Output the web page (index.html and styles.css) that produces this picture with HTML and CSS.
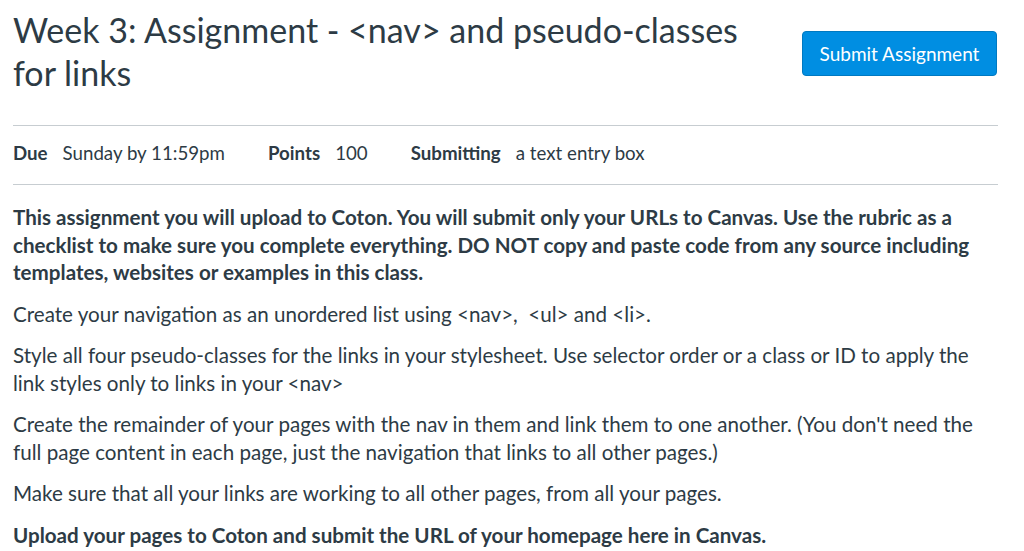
FILE: index.html
```html
<!DOCTYPE html>
<html>
<head>
<meta charset="utf-8">
<link rel="stylesheet" href="styles.css">
</head>
<body>
<div class="page">
  <header class="head">
    <h1 class="title">Week 3: Assignment - &lt;nav&gt; and pseudo-classes for links</h1>
    <button class="submit">Submit Assignment</button>
  </header>
  <ul class="meta">
    <li><span class="label">Due</span><span class="val">Sunday by 11:59pm</span></li>
    <li><span class="label">Points</span><span class="val">100</span></li>
    <li><span class="label">Submitting</span><span class="val">a text entry box</span></li>
  </ul>
  <div class="desc">
    <p class="strong">This assignment you will upload to Coton. You will submit only your URLs to Canvas. Use the rubric as a checklist to make sure you complete everything. DO NOT copy and paste code from any source including templates, websites or examples in this class.</p>
    <p>Create your navigation as an unordered list using &lt;nav&gt;,&nbsp; &lt;ul&gt; and &lt;li&gt;.</p>
    <p>Style all four pseudo-classes for the links in your stylesheet. Use selector order or a class or ID to apply the link styles only to links in your &lt;nav&gt;</p>
    <p>Create the remainder of your pages with the nav in them and link them to one another. (You don't need the full page content in each page, just the navigation that links to all other pages.)</p>
    <p>Make sure that all your links are working to all other pages, from all your pages.</p>
    <p class="strong">Upload your pages to Coton and submit the URL of your homepage here in Canvas.</p>
  </div>
</div>
</body>
</html>
```
FILE: styles.css
```css
html, body {
  margin: 0;
  padding: 0;
  background: #fff;
}
body {
  font-family: Lato, "Liberation Sans", sans-serif;
  color: #2d3b45;
}
.page {
  padding: 0 26px 0 13px;
}
.head {
  display: flex;
  justify-content: space-between;
  align-items: flex-start;
  padding-top: 8px;
  padding-bottom: 31px;
  border-bottom: 1px solid #c7cdd1;
}
.title {
  margin: 0;
  font-size: 34px;
  font-weight: 400;
  line-height: 43px;
  max-width: 750px;
}
.submit {
  margin-top: 23px;
  margin-right: 1px;
  width: 195px;
  height: 45px;
  background: #008ee2;
  border: 1px solid #0079c1;
  border-radius: 4px;
  color: #fff;
  font-family: Lato, "Liberation Sans", sans-serif;
  font-size: 19px;
  padding: 0;
}
.meta {
  list-style: none;
  margin: 0;
  padding: 0 0 4px 0;
  display: flex;
  gap: 43px;
  height: 54px;
  align-items: center;
  border-bottom: 1px solid #c7cdd1;
  font-size: 18.7px;
}
.label {
  font-weight: 700;
  margin-right: 15px;
}
.desc {
  padding-top: 19px;
  font-size: 20.6px;
  line-height: 27.5px;
}
.desc p {
  margin: 0 0 14px 0;
}
.desc .strong {
  font-weight: 700;
}
```
